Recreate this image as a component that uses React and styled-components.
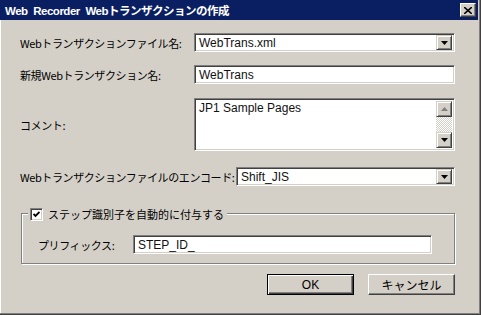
import styled, { createGlobalStyle } from "styled-components";

const GlobalStyle = createGlobalStyle`
  html, body {
    margin: 0;
    padding: 0;
    background: #d4d0c8;
    overflow: hidden;
  }
`;

const Window = styled.div`
  width: 481px;
  height: 315px;
  box-sizing: border-box;
  background: #d4d0c8;
  border-right: 1px solid #404040;
  border-bottom: 1px solid #404040;
  box-shadow: inset -1px -1px #808080, inset 1px 0 #ffffff;
  font-family: "Noto Sans CJK JP", "Liberation Sans", sans-serif;
  color: #000;
  display: flex;
  flex-direction: column;
`;

const TitleBar = styled.div`
  height: 20px;
  margin-right: 2px;
  background: #0a1f62;
  display: flex;
  align-items: center;
  justify-content: space-between;
  padding: 0 2px 0 5px;
`;

const Title = styled.span`
  color: #fff;
  font-family: "Liberation Sans", "Noto Sans CJK JP", sans-serif;
  font-weight: bold;
  font-size: 11.5px;
  letter-spacing: -0.5px;
  word-spacing: 3px;
`;

const CloseButton = styled.div`
  width: 16px;
  height: 14px;
  box-sizing: border-box;
  background: #d4d0c8;
  border: 1px solid;
  border-color: #ffffff #404040 #404040 #ffffff;
  box-shadow: inset -1px -1px #808080;
  display: flex;
  align-items: center;
  justify-content: center;
`;

const Body = styled.div`
  padding: 13px 25px 0 20px;
  display: flex;
  flex-direction: column;
`;

const FieldRow = styled.div`
  display: flex;
  align-items: center;
  margin-top: ${(p) => p.$top}px;
`;

const Label = styled.div`
  width: ${(p) => p.$w}px;
  flex-shrink: 0;
  font-size: 11px;
  letter-spacing: -0.4px;
  white-space: nowrap;
`;

const Sunken = styled.div`
  flex: 1;
  height: ${(p) => p.$h || 19}px;
  box-sizing: border-box;
  background: #fff;
  border: 1px solid;
  border-color: #808080 #ffffff #ffffff #808080;
  box-shadow: inset 1px 1px #404040, inset -1px -1px #d4d0c8;
  display: flex;
  align-items: ${(p) => (p.$multi ? "stretch" : "center")};
  padding: 2px;
`;

const FieldText = styled.span`
  flex: 1;
  font-family: "Liberation Sans", sans-serif;
  font-size: 12px;
  padding-left: 2px;
  line-height: 14px;
  color: #111;
`;

const RaisedBtn = styled.div`
  width: 16px;
  height: ${(p) => p.$h || 15}px;
  box-sizing: border-box;
  background: #d4d0c8;
  border: 1px solid;
  border-color: #d4d0c8 #404040 #404040 #d4d0c8;
  box-shadow: inset 1px 1px #fff, inset -1px -1px #808080;
  display: flex;
  align-items: center;
  justify-content: center;
`;

const Scrollbar = styled.div`
  width: 16px;
  display: flex;
  flex-direction: column;
  justify-content: space-between;
  background-color: #e8e6e2;
  background-image: repeating-conic-gradient(#ffffff 0 25%, #d4d0c8 0 50%);
  background-size: 2px 2px;
`;

const Group = styled.div`
  margin-top: 27px;
  margin-left: 1px;
  height: 51px;
  box-sizing: border-box;
  border: 1px solid #808080;
  box-shadow: 1px 1px #fff, inset 1px 1px #fff;
  position: relative;
  display: flex;
  align-items: center;
  padding: 12px 22px 0 16px;
`;

const Legend = styled.div`
  position: absolute;
  top: -8px;
  left: 6px;
  padding: 0 3px 0 2px;
  background: #d4d0c8;
  display: flex;
  align-items: center;
  gap: 5px;
  font-size: 11px;
`;

const CheckBox = styled.div`
  width: 13px;
  height: 13px;
  box-sizing: border-box;
  background: #fff;
  border: 1px solid;
  border-color: #808080 #ffffff #ffffff #808080;
  box-shadow: inset 1px 1px #404040, inset -1px -1px #d4d0c8;
  display: flex;
  align-items: center;
  justify-content: center;
`;

const Buttons = styled.div`
  display: flex;
  justify-content: flex-end;
  gap: 14px;
  margin-top: 10px;
`;

const Button = styled.div`
  width: 87px;
  height: 21px;
  box-sizing: border-box;
  background: #d4d0c8;
  border: 1px solid;
  border-color: ${(p) =>
    p.$default ? "#000" : "#ffffff #404040 #404040 #ffffff"};
  box-shadow: ${(p) =>
    p.$default
      ? "inset 1px 1px #fff, inset -1px -1px #404040, inset -2px -2px #808080"
      : "inset -1px -1px #808080"};
  display: flex;
  align-items: center;
  justify-content: center;
  font-size: 12px;
  font-family: "Liberation Sans", "Noto Sans CJK JP", sans-serif;
`;

const Arrow = ({ up }) => (
  <svg width="7" height="4" viewBox="0 0 7 4">
    <path d={up ? "M3.5 0 L7 4 L0 4 Z" : "M0 0 L7 0 L3.5 4 Z"} fill={up ? "#808080" : "#000"} />
  </svg>
);

const ComboArrow = () => (
  <RaisedBtn>
    <svg width="7" height="4" viewBox="0 0 7 4">
      <path d="M0 0 L7 0 L3.5 4 Z" fill="#000" />
    </svg>
  </RaisedBtn>
);

export default function App() {
  return (
    <>
      <GlobalStyle />
      <Window>
        <TitleBar>
          <Title>Web Recorder Webトランザクションの作成</Title>
          <CloseButton>
            <svg width="8" height="7" viewBox="0 0 8 7">
              <path d="M0 0 L8 7 M8 0 L0 7" stroke="#000" strokeWidth="1.6" />
            </svg>
          </CloseButton>
        </TitleBar>
        <Body>
          <FieldRow $top={0}>
            <Label $w={174}>Webトランザクションファイル名:</Label>
            <Sunken>
              <FieldText>WebTrans.xml</FieldText>
              <ComboArrow />
            </Sunken>
          </FieldRow>
          <FieldRow $top={13}>
            <Label $w={174}>新規Webトランザクション名:</Label>
            <Sunken>
              <FieldText>WebTrans</FieldText>
            </Sunken>
          </FieldRow>
          <FieldRow $top={14}>
            <Label $w={174}>コメント:</Label>
            <Sunken $h={53} $multi>
              <FieldText>JP1 Sample Pages</FieldText>
              <Scrollbar>
                <RaisedBtn $h={16}>
                  <Arrow up />
                </RaisedBtn>
                <RaisedBtn $h={16}>
                  <Arrow />
                </RaisedBtn>
              </Scrollbar>
            </Sunken>
          </FieldRow>
          <FieldRow $top={16}>
            <Label $w={216}>Webトランザクションファイルのエンコード:</Label>
            <Sunken>
              <FieldText>Shift_JIS</FieldText>
              <ComboArrow />
            </Sunken>
          </FieldRow>
          <Group>
            <Legend>
              <CheckBox>
                <svg width="7" height="7" viewBox="0 0 7 7">
                  <path d="M0.5 3 L2.5 5 L6.5 1" stroke="#000" strokeWidth="1.8" fill="none" />
                </svg>
              </CheckBox>
              ステップ識別子を自動的に付与する
            </Legend>
            <Label $w={95}>プリフィックス:</Label>
            <Sunken>
              <FieldText>STEP_ID_</FieldText>
            </Sunken>
          </Group>
          <Buttons>
            <Button $default>OK</Button>
            <Button>キャンセル</Button>
          </Buttons>
        </Body>
      </Window>
    </>
  );
}
